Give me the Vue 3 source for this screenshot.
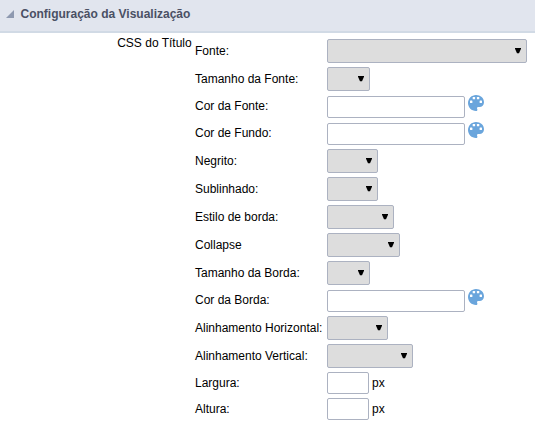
<script setup>
const fields = [
  { label: 'Fonte:', type: 'select', width: 200 },
  { label: 'Tamanho da Fonte:', type: 'select', width: 43 },
  { label: 'Cor da Fonte:', type: 'color', width: 138 },
  { label: 'Cor de Fundo:', type: 'color', width: 138 },
  { label: 'Negrito:', type: 'select', width: 51 },
  { label: 'Sublinhado:', type: 'select', width: 51 },
  { label: 'Estilo de borda:', type: 'select', width: 67 },
  { label: 'Collapse', type: 'select', width: 73 },
  { label: 'Tamanho da Borda:', type: 'select', width: 43 },
  { label: 'Cor da Borda:', type: 'color', width: 138 },
  { label: 'Alinhamento Horizontal:', type: 'select', width: 61 },
  { label: 'Alinhamento Vertical:', type: 'select', width: 86 },
  { label: 'Largura:', type: 'size', width: 42 },
  { label: 'Altura:', type: 'size', width: 42 },
]
</script>

<template>
  <section class="panel">
    <header class="header">
      <svg class="toggle" width="8" height="8" viewBox="0 0 8 8"><path d="M8 0V8H0Z" fill="#8e99b0" /></svg>
      <span>Configuração da Visualização</span>
    </header>
    <div class="content">
      <div class="group">CSS do Título</div>
      <div class="fields">
        <div v-for="f in fields" :key="f.label" class="row" :class="f.type">
          <label class="label">{{ f.label }}</label>
          <button v-if="f.type === 'select'" class="picker" :style="{ width: f.width + 'px' }">
            <svg width="6" height="6" viewBox="0 0 6 6"><path d="M0 0H6V.7L4 5.2H2L0 .7Z" fill="#000" /></svg>
          </button>
          <input v-else class="input" type="text" :style="{ width: f.width + 'px' }" />
          <svg v-if="f.type === 'color'" class="palette" width="16" height="16" viewBox="0 0 16 16">
            <path
              fill="#6aa5dc"
              d="M8 0C12.500 0 16 3 16 7.200C16 10 14 12 11.500 12H10.200C9.200 12 8.700 13 9.200 13.900C9.800 14.900 9.200 16 8 16C3.600 16 0 12.400 0 8S3.600 0 8 0Z"
            />
            <g fill="#fff">
              <rect x="2" y="5.600" width="2.400" height="2.400" rx=".5" />
              <rect x="4.700" y="1.900" width="2.400" height="2.400" rx=".5" />
              <rect x="8.900" y="1.900" width="2.400" height="2.400" rx=".5" />
              <rect x="11.600" y="5.600" width="2.400" height="2.400" rx=".5" />
            </g>
          </svg>
          <span v-if="f.type === 'size'" class="unit">px</span>
        </div>
      </div>
    </div>
  </section>
</template>

<style>
body {
  margin: 0;
  background: #fff;
}
</style>

<style scoped>
.panel {
  height: 424px;
  overflow: hidden;
  font: 12px/14px "Liberation Sans", Arial, sans-serif;
  color: #000;
}
.header {
  box-sizing: border-box;
  display: flex;
  align-items: center;
  height: 33px;
  padding: 0 6px 3px;
  gap: 6.5px;
  background: #e1e5ee;
  border-bottom: 2px solid #d1dae5;
  color: #4a5064;
  font-weight: bold;
}
.content {
  display: flex;
  gap: 3.3px;
}
.group {
  width: 191.7px;
  padding-top: 3px;
  text-align: right;
}
.fields {
  padding-top: 4px;
}
.row {
  display: flex;
  align-items: center;
  height: 28px;
}
.color {
  height: 27px;
}
.size {
  height: 26px;
}
.label {
  width: 132px;
  white-space: nowrap;
}
.color .label {
  padding-bottom: 1px;
}
.picker {
  box-sizing: border-box;
  display: flex;
  align-items: center;
  justify-content: flex-end;
  height: 24px;
  padding: 0 5px 0 0;
  border: 1px solid #acb2c1;
  border-radius: 2px;
  background: #ddd;
}
.input {
  box-sizing: border-box;
  height: 22px;
  margin: 0;
  padding: 0 3px;
  border: 1px solid #acb2c1;
  border-radius: 2px;
  background: #fff;
}
.color .input {
  align-self: flex-start;
  margin-top: 3px;
}
.palette {
  align-self: flex-start;
  margin: 2px 0 0 3px;
}
.unit {
  margin-left: 3px;
}
</style>
